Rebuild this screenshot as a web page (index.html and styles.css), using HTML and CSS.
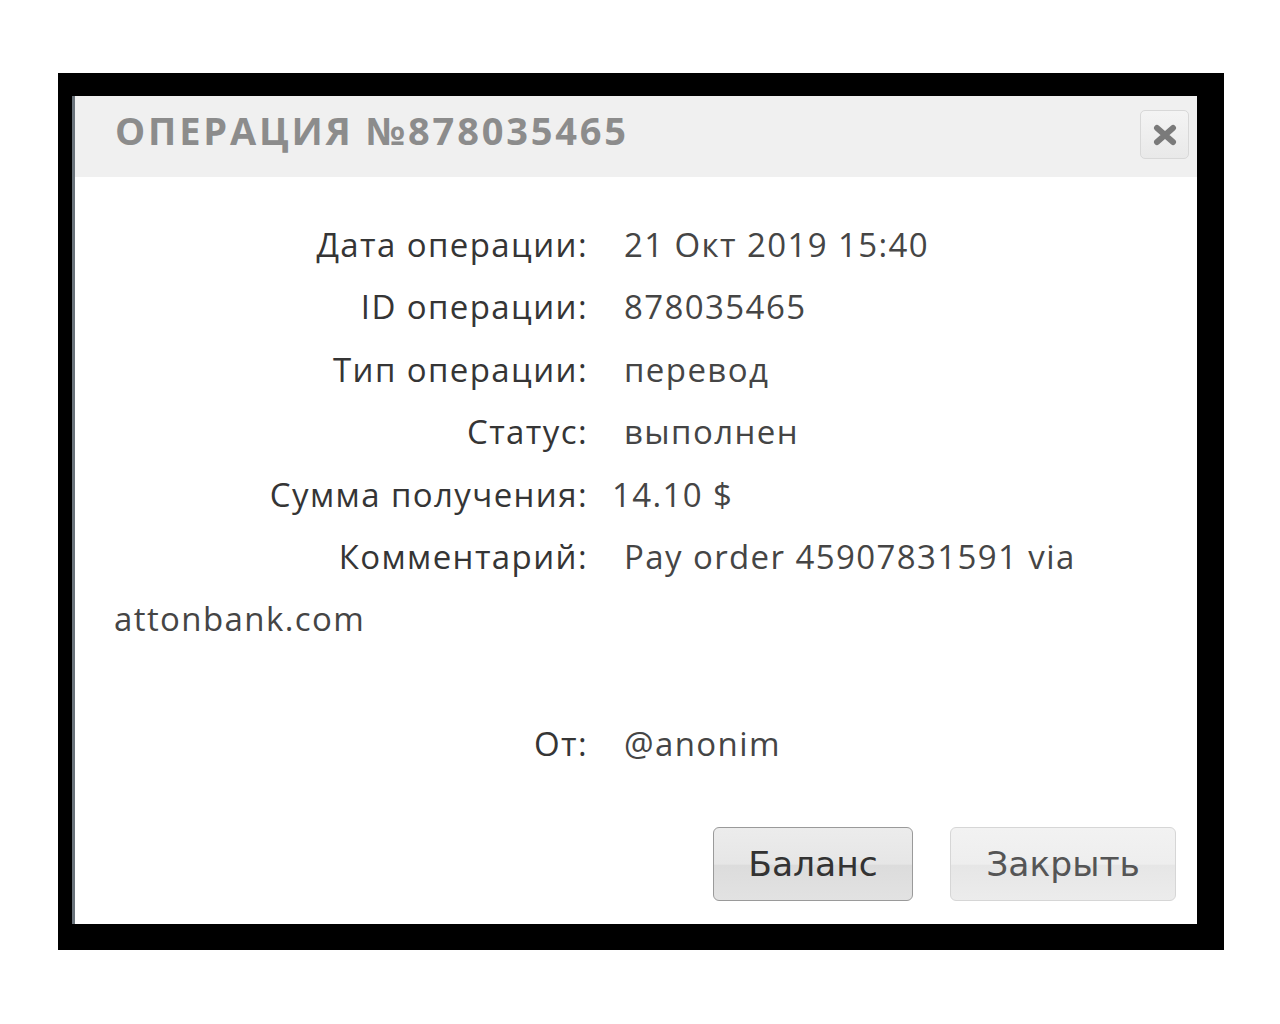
FILE: index.html
```html
<!DOCTYPE html>
<html lang="ru">
<head>
<meta charset="utf-8">
<title>Операция №878035465</title>
<link rel="stylesheet" href="styles.css">
</head>
<body>
<div class="frame">
  <div class="dialog">
    <div class="header">
      <div class="title">Операция №878035465</div>
      <button class="close" aria-label="Закрыть">
        <svg width="26" height="22" viewBox="0 0 26 22"><path d="M5 4 L21 18 M21 4 L5 18" stroke="#7a7a7a" stroke-width="6" stroke-linecap="round"/></svg>
      </button>
    </div>
    <div class="body">
      <div class="row"><span class="label">Дата операции:</span><span class="value">21 Окт 2019 15:40</span></div>
      <div class="row"><span class="label">ID операции:</span><span class="value">878035465</span></div>
      <div class="row"><span class="label">Тип операции:</span><span class="value">перевод</span></div>
      <div class="row"><span class="label">Статус:</span><span class="value">выполнен</span></div>
      <div class="row"><span class="label">Сумма получения:</span><span class="value amount">14.10 $</span></div>
      <div class="row"><span class="label">Комментарий:</span><span class="value">Pay order 45907831591 via attonbank.com</span></div>
      <div class="row empty"></div>
      <div class="row"><span class="label">От:</span><span class="value">@anonim</span></div>
    </div>
    <div class="footer">
      <button class="btn primary">Баланс</button>
      <button class="btn secondary">Закрыть</button>
    </div>
  </div>
</div>
</body>
</html>
```
FILE: styles.css
```css
html, body {
  margin: 0;
  padding: 0;
  background: #ffffff;
}
.frame {
  margin: 73px 0 0 58px;
  width: 1166px;
  height: 877px;
  box-sizing: border-box;
  background: #000;
  padding: 23px 27px 26px 14px;
}
.dialog {
  width: 1125px;
  height: 828px;
  box-sizing: border-box;
  background: #fff;
  border-left: 3px solid #6a737b;
  display: flex;
  flex-direction: column;
}
.header {
  height: 81px;
  box-sizing: border-box;
  background: #f0f0f0;
  display: flex;
  align-items: center;
  justify-content: space-between;
  padding: 0 8px 14px 40px;
}
.title {
  font-family: "Open Sans", sans-serif;
  font-weight: 700;
  font-size: 38px;
  letter-spacing: 2.8px;
  text-transform: uppercase;
  color: #8c8c8c;
  line-height: 1;
}
.close {
  width: 49px;
  height: 49px;
  margin-top: 10px;
  border: 1px solid #d8d8d8;
  border-radius: 5px;
  background: linear-gradient(#f4f4f4, #e9e9e9);
  display: flex;
  align-items: center;
  justify-content: center;
  padding: 0;
}
.body {
  padding: 37px 36px 0 39px;
  font-family: "Open Sans", sans-serif;
  font-size: 33px;
  letter-spacing: 1.4px;
  line-height: 62.4px;
  color: #454545;
}
.row.empty {
  height: 62.4px;
}
.label {
  display: inline-block;
  width: 474px;
  text-align: right;
  margin-right: 36px;
  color: #353535;
}
.amount {
  margin-left: -12px;
}
.footer {
  margin-top: auto;
  display: flex;
  justify-content: flex-end;
  gap: 37px;
  padding: 0 21px 23px 0;
}
.btn {
  height: 74px;
  border-radius: 6px;
  font-family: "DejaVu Sans", sans-serif;
  font-size: 34.5px;
  padding: 0;
}
.btn.primary {
  width: 200px;
  border: 1px solid #9a9a9a;
  color: #333;
  background: linear-gradient(#ececec 0%, #e6e6e6 50%, #dcdcdc 52%, #e2e2e2 100%);
}
.btn.secondary {
  width: 226px;
  border: 1px solid #d6d6d6;
  color: #555;
  background: linear-gradient(#f2f2f2 0%, #eeeeee 50%, #e6e6e6 52%, #ececec 100%);
}
```
